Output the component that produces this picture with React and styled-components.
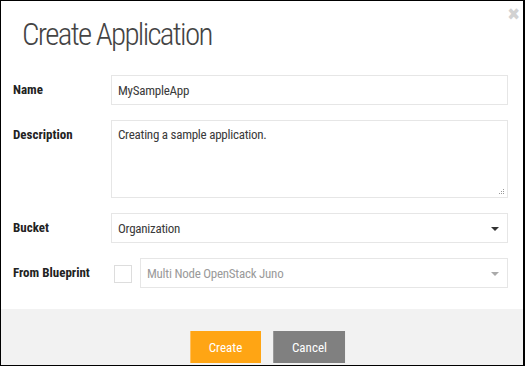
import React from 'react'
import styled, { createGlobalStyle } from 'styled-components'

const Global = createGlobalStyle`
    html, body {
        margin: 0;
        padding: 0;
        background: #fff;
    }
    body {
        font-family: 'Roboto Condensed', 'Arial Narrow', 'Liberation Sans Narrow', Roboto, sans-serif;
        font-stretch: 75%;
    }
`

const Modal = styled.div`
    box-sizing: border-box;
    width: 525px;
    height: 366px;
    border: 1px solid #000;
    border-right-width: 2px;
    background: #fff;
    position: relative;
    display: flex;
    flex-direction: column;
    overflow: hidden;
`

const Close = styled.span`
    position: absolute;
    top: 3px;
    right: 3px;
    color: #d2d2d2;
    font-family: 'DejaVu Sans', sans-serif;
    font-weight: bold;
    font-size: 17px;
    line-height: 20px;
`

const Header = styled.div`
    padding: 16px 0 0 21px;
    height: 57px;
    box-sizing: border-box;
    h1 {
        margin: 0;
        font-weight: 300;
        font-size: 31px;
        letter-spacing: -1.7px;
        line-height: 36px;
        color: #444;
    }
`

const Body = styled.div`
    display: flex;
    flex-direction: column;
    gap: 15px;
    padding: 17px 15px 21px 12px;
`

const Row = styled.div`
    display: flex;
    align-items: flex-start;
`

const Label = styled.label`
    width: 98px;
    flex: none;
    white-space: nowrap;
    font-weight: bold;
    font-size: 13px;
    color: #222;
    line-height: 30px;
`

const Field = styled.div`
    flex: 1;
    box-sizing: border-box;
    height: 30px;
    border: 1px solid #e6e6e6;
    display: flex;
    align-items: center;
    padding: 0 6px;
    font-size: 13px;
    letter-spacing: -0.25px;
    white-space: nowrap;
    color: ${p => (p.$disabled ? '#9a9a9a' : '#3a3a3a')};
    position: relative;
`

const AreaBox = styled.div`
    flex: 1;
    position: relative;
    display: flex;
`

const Area = styled.textarea`
    flex: 1;
    box-sizing: border-box;
    height: 78px;
    border: 1px solid #e6e6e6;
    padding: 6px 6px;
    margin: 0;
    font-family: inherit;
    font-stretch: inherit;
    font-size: 13px;
    letter-spacing: -0.25px;
    color: #3a3a3a;
    resize: none;
    outline: none;
`

const Grip = styled.svg`
    position: absolute;
    right: 3px;
    bottom: 3px;
`

const Caret = styled.span`
    position: absolute;
    right: 8px;
    top: 13px;
    width: 0;
    height: 0;
    border-left: 4px solid transparent;
    border-right: 4px solid transparent;
    border-top: 4px solid ${p => (p.$disabled ? '#aaa' : '#333')};
`

const Check = styled.span`
    width: 18px;
    height: 18px;
    box-sizing: border-box;
    border: 1px solid #ddd;
    margin: 7px 8px 0 3px;
    flex: none;
`

const Footer = styled.div`
    flex: 1;
    background: #f2f2f2;
    display: flex;
    justify-content: center;
    align-items: flex-start;
    gap: 12px;
    padding: 22px 0 0 12px;
`

const Button = styled.button`
    width: ${p => p.$w}px;
    height: 32px;
    border: none;
    border-left: 1px solid ${p => (p.$primary ? '#ffc060' : '#9a9a9a')};
    border-right: 1px solid ${p => (p.$primary ? '#ffa514' : '#eee')};
    background: ${p => (p.$primary ? '#ffa514' : '#808080')};
    color: #fff;
    font-family: inherit;
    font-stretch: inherit;
    font-size: 13px;
    padding: 0;
`

const App = () => {
    return (
        <>
            <Global />
            <Modal>
                <Close>✖</Close>
                <Header>
                    <h1>Create Application</h1>
                </Header>
                <Body>
                    <Row>
                        <Label>Name</Label>
                        <Field>MySampleApp</Field>
                    </Row>
                    <Row>
                        <Label>Description</Label>
                        <AreaBox>
                            <Area defaultValue="Creating a sample application." />
                            <Grip width="6" height="6" viewBox="0 0 6 6">
                                <g fill="#999">
                                    <rect x="4" y="0" width="1" height="1" />
                                    <rect x="2" y="2" width="1" height="1" />
                                    <rect x="4" y="2" width="1" height="1" />
                                    <rect x="0" y="4" width="1" height="1" />
                                    <rect x="2" y="4" width="1" height="1" />
                                    <rect x="4" y="4" width="1" height="1" />
                                </g>
                            </Grip>
                        </AreaBox>
                    </Row>
                    <Row>
                        <Label>Bucket</Label>
                        <Field>
                            Organization
                            <Caret />
                        </Field>
                    </Row>
                    <Row>
                        <Label>From Blueprint</Label>
                        <Check />
                        <Field $disabled>
                            Multi Node OpenStack Juno
                            <Caret $disabled />
                        </Field>
                    </Row>
                </Body>
                <Footer>
                    <Button $primary $w={71}>Create</Button>
                    <Button $w={73}>Cancel</Button>
                </Footer>
            </Modal>
        </>
    )
}

export default App
